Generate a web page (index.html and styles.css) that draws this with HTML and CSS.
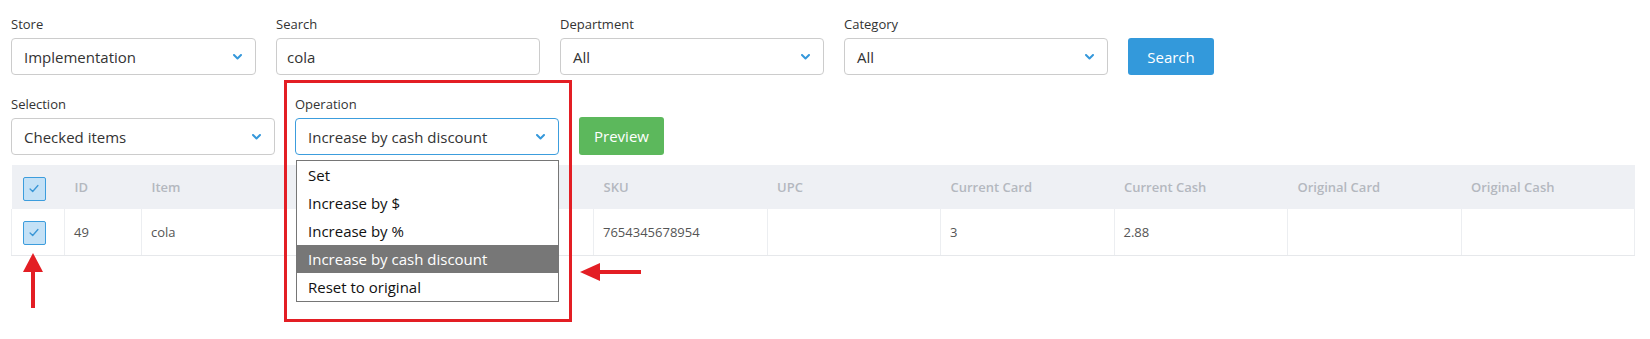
FILE: index.html
```html
<!DOCTYPE html>
<html lang="en">
<head>
<meta charset="utf-8">
<title>Price update</title>
<link rel="stylesheet" href="styles.css">
</head>
<body>
<div class="page">
  <div class="row row-top">
    <div class="field w-store">
      <label class="label">Store</label>
      <div class="select"><span>Implementation</span><svg class="chev" viewBox="0 0 9 6"><path d="M1 1 L4.5 4.5 L8 1"/></svg></div>
    </div>
    <div class="field w-wide">
      <label class="label">Search</label>
      <input class="input" type="text" value="cola">
    </div>
    <div class="field w-wide">
      <label class="label">Department</label>
      <div class="select"><span>All</span><svg class="chev" viewBox="0 0 9 6"><path d="M1 1 L4.5 4.5 L8 1"/></svg></div>
    </div>
    <div class="field w-wide">
      <label class="label">Category</label>
      <div class="select"><span>All</span><svg class="chev" viewBox="0 0 9 6"><path d="M1 1 L4.5 4.5 L8 1"/></svg></div>
    </div>
    <button class="btn btn-blue">Search</button>
  </div>

  <div class="row row-second">
    <div class="field w-wide">
      <label class="label">Selection</label>
      <div class="select"><span>Checked items</span><svg class="chev" viewBox="0 0 9 6"><path d="M1 1 L4.5 4.5 L8 1"/></svg></div>
    </div>
    <div class="field w-op">
      <label class="label">Operation</label>
      <div class="select-wrap">
        <div class="select focused"><span>Increase by cash discount</span><svg class="chev" viewBox="0 0 9 6"><path d="M1 1 L4.5 4.5 L8 1"/></svg></div>
        <ul class="dropdown">
          <li>Set</li>
          <li>Increase by $</li>
          <li>Increase by %</li>
          <li class="active">Increase by cash discount</li>
          <li>Reset to original</li>
        </ul>
      </div>
    </div>
    <button class="btn btn-green">Preview</button>
  </div>

  <table class="grid">
    <colgroup>
      <col class="c-check"><col class="c-id"><col class="c-item"><col class="c-std"><col class="c-std"><col class="c-std"><col class="c-std"><col class="c-std"><col class="c-std">
    </colgroup>
    <thead>
      <tr>
        <th class="check-cell"><span class="cb"><svg viewBox="0 0 23 24"><path d="M7 12.5 L10 15.5 L16 8.5"/></svg></span></th>
        <th>ID</th>
        <th>Item</th>
        <th>SKU</th>
        <th>UPC</th>
        <th>Current Card</th>
        <th>Current Cash</th>
        <th>Original Card</th>
        <th>Original Cash</th>
      </tr>
    </thead>
    <tbody>
      <tr>
        <td class="check-cell"><span class="cb"><svg viewBox="0 0 23 24"><path d="M7 12.5 L10 15.5 L16 8.5"/></svg></span></td>
        <td>49</td>
        <td>cola</td>
        <td>7654345678954</td>
        <td></td>
        <td>3</td>
        <td>2.88</td>
        <td></td>
        <td></td>
      </tr>
    </tbody>
  </table>
</div>

<div class="annot-box"></div>
<svg class="arrow-up" viewBox="0 0 22 56"><polygon points="10,0 0,19 20,19"/><rect x="8" y="18" width="4" height="37"/></svg>
<svg class="arrow-left" viewBox="0 0 62 20"><polygon points="0,10 20,1 20,19"/><rect x="18" y="8" width="43" height="4"/></svg>
</body>
</html>
```

FILE: styles.css
```css
* { box-sizing: border-box; }

html, body {
  margin: 0;
  padding: 0;
  background: #ffffff;
}

body {
  font-family: "Open Sans", "Liberation Sans", sans-serif;
  color: #333333;
  position: relative;
  width: 1650px;
  height: 339px;
  overflow: hidden;
}

.page {
  padding: 15px 0 0 11px;
}

.row {
  display: flex;
  align-items: flex-end;
  gap: 20px;
}

.row-second {
  margin-top: 20px;
}

.field {
  display: flex;
  flex-direction: column;
}

.w-store { width: 245px; }
.w-wide { width: 264px; }
.w-op { width: 264px; }

.label {
  font-size: 13px;
  line-height: 18px;
  margin-bottom: 5px;
  color: #333333;
}

.select,
.input {
  height: 37px;
  border: 1px solid #cccccc;
  border-radius: 4px;
  font-family: "Open Sans", "Liberation Sans", sans-serif;
  font-size: 15px;
  color: #333333;
  background: #ffffff;
}

.select {
  display: flex;
  align-items: center;
  justify-content: space-between;
  padding: 0 13px 0 12px;
}

.select.focused {
  border-color: #3c9ddd;
}

.input {
  width: 100%;
  padding: 0 10px;
  outline: none;
}

.chev {
  width: 9px;
  height: 6px;
  flex: none;
}

.chev path {
  fill: none;
  stroke: #3598db;
  stroke-width: 2;
  stroke-linecap: round;
  stroke-linejoin: round;
}

.btn {
  height: 37px;
  border: none;
  border-radius: 3px;
  color: #ffffff;
  font-family: "Open Sans", "Liberation Sans", sans-serif;
  font-size: 15px;
  padding: 0;
}

.btn-blue {
  width: 86px;
  background: #3399db;
}

.btn-green {
  width: 85px;
  background: #5cb85c;
  height: 38px;
}

.select-wrap {
  position: relative;
}

.dropdown {
  position: absolute;
  top: 42px;
  left: 1px;
  width: 263px;
  margin: 0;
  padding: 0;
  list-style: none;
  border: 1px solid #767676;
  background: #ffffff;
  z-index: 5;
}

.dropdown li {
  height: 28px;
  line-height: 28px;
  padding-left: 11px;
  font-size: 15px;
  color: #111111;
}

.dropdown li.active {
  background: #777777;
  color: #ffffff;
}

.grid {
  margin-top: 10px;
  width: 1623px;
  border-collapse: collapse;
  table-layout: fixed;
  font-size: 13px;
}

.c-check { width: 53px; }
.c-id { width: 77px; }
.c-item { width: 452px; }
.c-std { width: 173.5px; }

.grid th {
  background: #eef0f4;
  height: 44px;
  text-align: left;
  font-weight: 600;
  color: #b4b8bf;
  padding: 0 10px;
}

.grid td {
  height: 46px;
  color: #555555;
  padding: 0 10px 0 9px;
  border-left: 1px solid #eceef1;
  border-bottom: 1px solid #e6e8eb;
}

.grid td:last-child {
  border-right: 1px solid #eceef1;
}

.grid .check-cell {
  padding: 0 0 0 11px;
}

.cb {
  display: block;
  width: 23px;
  height: 24px;
  border: 1.5px solid #3c9ddd;
  border-radius: 2px;
  background: #c4e1f6;
  margin-top: 3px;
}

.cb svg {
  display: block;
  width: 20px;
  height: 21px;
}

.cb path {
  fill: none;
  stroke: #3a96d6;
  stroke-width: 1.5;
  stroke-linecap: round;
  stroke-linejoin: round;
}

.annot-box {
  position: absolute;
  left: 284px;
  top: 80px;
  width: 288px;
  height: 242px;
  border: 3px solid #e31e24;
  pointer-events: none;
  z-index: 10;
}

.arrow-up {
  position: absolute;
  left: 23px;
  top: 253px;
  width: 22px;
  height: 56px;
  fill: #e31e24;
}

.arrow-left {
  position: absolute;
  left: 580px;
  top: 262px;
  width: 62px;
  height: 20px;
  fill: #e31e24;
}
```
